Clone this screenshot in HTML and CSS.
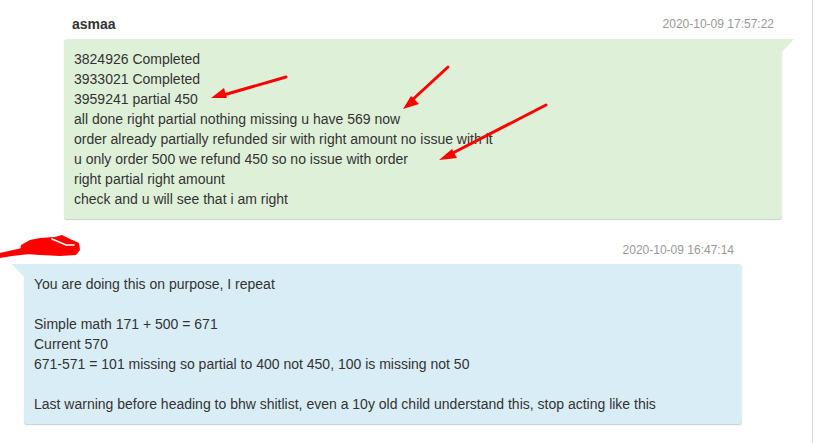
FILE: index.html
```html
<!DOCTYPE html>
<html>
<head>
<meta charset="utf-8">
<link rel="stylesheet" href="styles.css">
</head>
<body>
<div class="chat">
  <div class="msg msg-out">
    <div class="meta"><span class="name">asmaa</span><span class="time">2020-10-09 17:57:22</span></div>
    <div class="bubble bubble-green">
      <div>3824926 Completed</div>
      <div>3933021 Completed</div>
      <div>3959241 partial 450</div>
      <div>all done right partial nothing missing u have 569 now</div>
      <div>order already partially refunded sir with right amount no issue with it</div>
      <div>u only order 500 we refund 450 so no issue with order</div>
      <div>right partial right amount</div>
      <div>check and u will see that i am right</div>
    </div>
  </div>
  <div class="msg msg-in">
    <div class="meta"><span class="name"></span><span class="time">2020-10-09 16:47:14</span></div>
    <div class="bubble bubble-blue">
      <div>You are doing this on purpose, I repeat</div>
      <div class="blank"></div>
      <div>Simple math 171 + 500 = 671</div>
      <div>Current 570</div>
      <div>671-571 = 101 missing so partial to 400 not 450, 100 is missing not 50</div>
      <div class="blank"></div>
      <div>Last warning before heading to bhw shitlist, even a 10y old child understand this, stop acting like this</div>
    </div>
  </div>
</div>
<svg class="annot" width="831" height="443" viewBox="0 0 831 443">
  <g stroke="#ff0000" stroke-width="3" stroke-linecap="round" fill="none">
    <line x1="286" y1="77" x2="220" y2="96"/>
    <line x1="448" y1="67" x2="410" y2="102"/>
    <line x1="546" y1="105" x2="447" y2="156"/>
  </g>
  <g fill="#ff0000">
    <polygon points="211,98 227,98 224,88"/>
    <polygon points="403,109 411,96 419,104"/>
    <polygon points="439,160 452,149 457,158"/>
    <path d="M0 253 L22 248 L30 247 L30 254 L12 256 L0 258 Z"/>
    <path d="M21 245 L30 240 L40 238 L55 237 L62 235 L70 239 L79 243 L80 250 L76 255 L60 256 L40 255 L26 254 L20 251 Z"/>
  </g>
  <path d="M52 239 L66 245 L74 245" stroke="#ffffff" stroke-width="1.5" fill="none" stroke-linecap="round"/>
</svg>
</body>
</html>
```
FILE: styles.css
```css
html, body {
  margin: 0;
  padding: 0;
  background: #ffffff;
}
body {
  font-family: "Liberation Sans", Arial, sans-serif;
  font-size: 14px;
  line-height: 20px;
  color: #333333;
  position: relative;
  width: 831px;
  height: 443px;
  overflow: hidden;
}
.chat {
  width: 812px;
  height: 443px;
  border-right: 1px solid #dddddd;
  padding-top: 14px;
  display: flex;
  flex-direction: column;
  gap: 21px;
}
.msg {
  display: flex;
  flex-direction: column;
  gap: 5px;
}
.msg-out {
  margin-left: 64px;
  margin-right: 30px;
}
.msg-in {
  margin-left: 24px;
  margin-right: 70px;
  gap: 4px;
}
.meta {
  display: flex;
  justify-content: space-between;
  padding: 0 8px;
  height: 20px;
  align-items: center;
}
.name {
  font-weight: bold;
  font-size: 14px;
}
.time {
  font-size: 12px;
  color: #999999;
}
.bubble {
  position: relative;
  padding: 10px;
  border-radius: 3px;
  box-shadow: 0 1px 1px rgba(0, 0, 0, 0.2);
}
.bubble-green {
  background: #dff0d8;
  border-top-right-radius: 0;
}
.bubble-green::before {
  content: "";
  position: absolute;
  top: 0;
  left: 100%;
  width: 0;
  height: 0;
  border-top: 13px solid #dff0d8;
  border-right: 12px solid transparent;
}
.bubble-blue {
  background: #d9edf7;
  border-top-left-radius: 0;
}
.bubble-blue::before {
  content: "";
  position: absolute;
  top: 0;
  right: 100%;
  width: 0;
  height: 0;
  border-top: 13px solid #d9edf7;
  border-left: 12px solid transparent;
}
.blank {
  height: 20px;
}
.annot {
  position: absolute;
  left: 0;
  top: 0;
  pointer-events: none;
}
```
